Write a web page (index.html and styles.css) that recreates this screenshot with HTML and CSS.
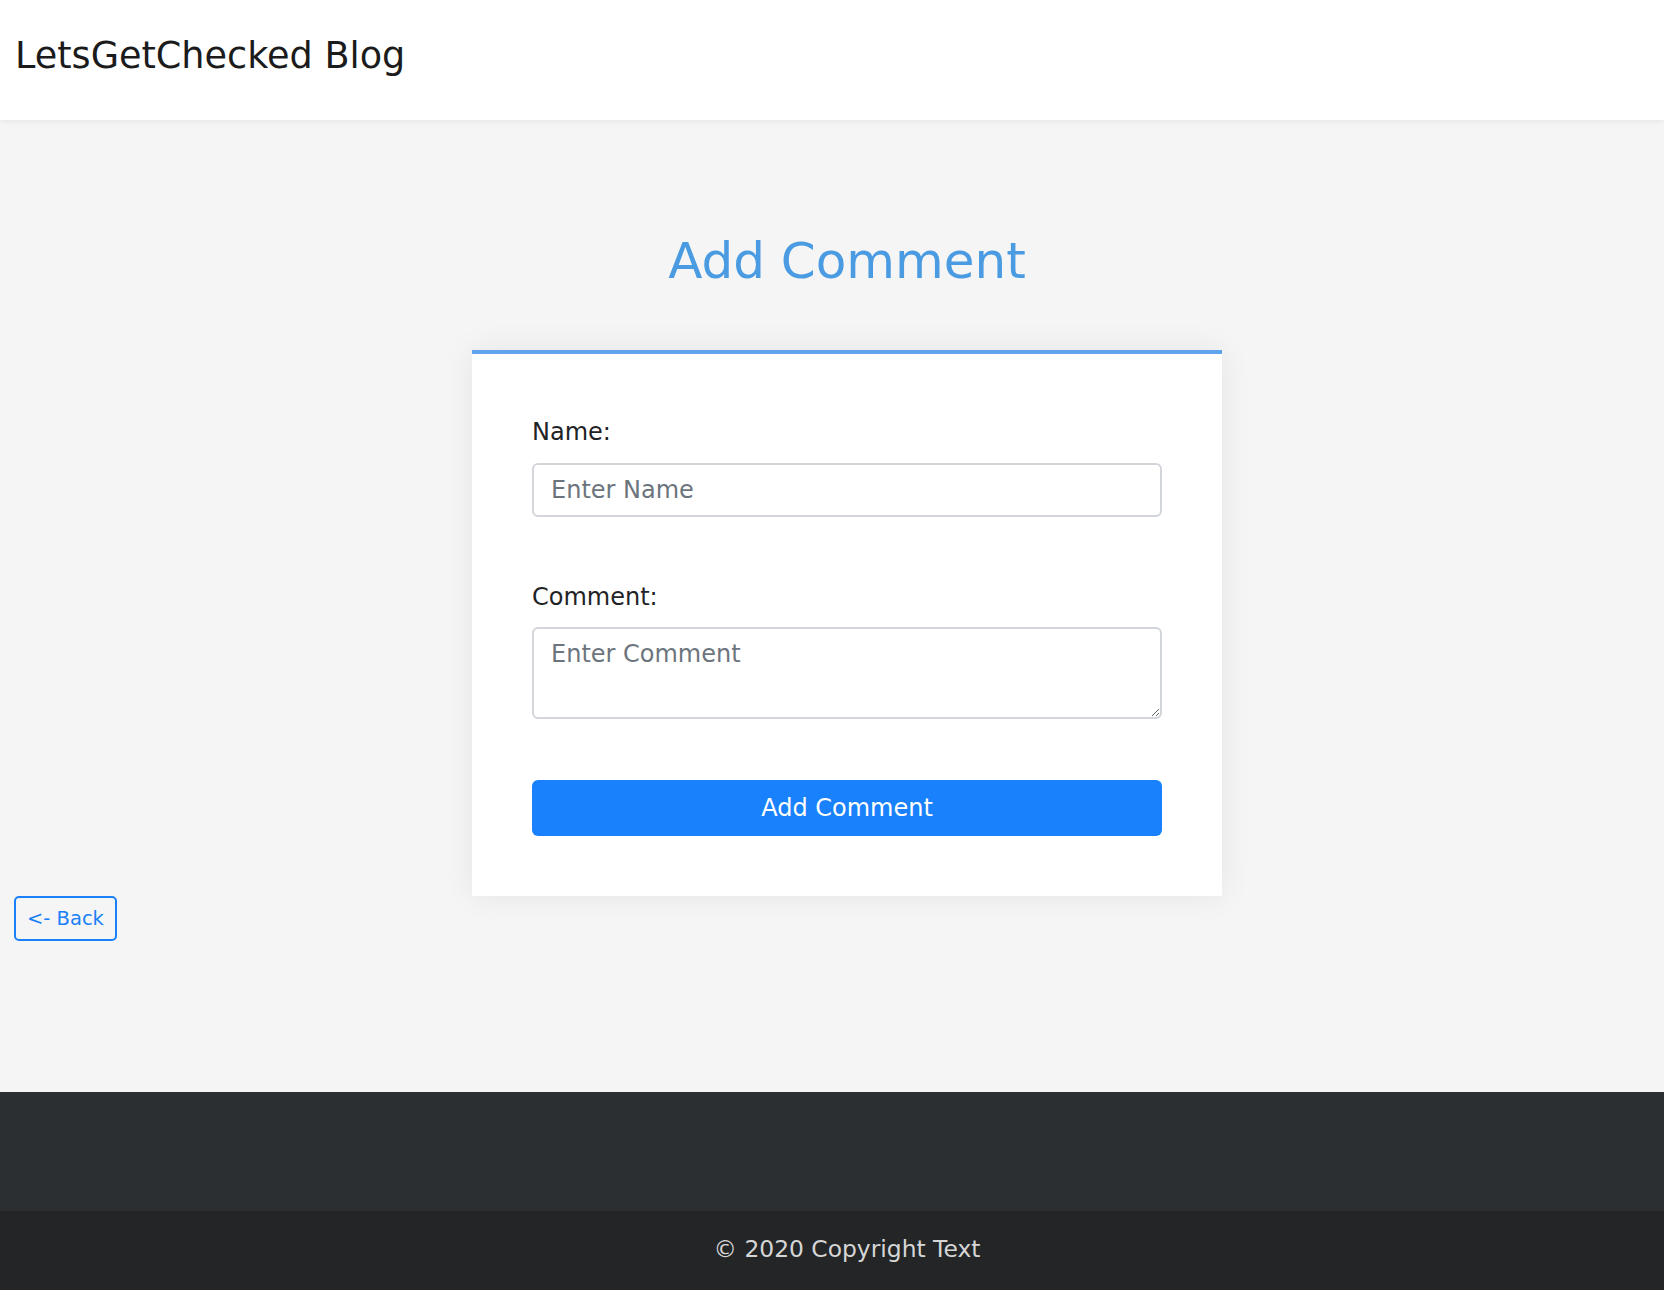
FILE: index.html
```html
<!DOCTYPE html>
<html lang="en">
<head>
<meta charset="utf-8">
<title>LetsGetChecked Blog</title>
<link rel="stylesheet" href="styles.css">
</head>
<body>
<header class="site-header">
  <div class="brand">LetsGetChecked Blog</div>
</header>
<main class="main">
  <div class="content">
    <h1 class="page-title">Add Comment</h1>
    <form class="card">
      <div class="form-group">
        <label class="form-label" for="name">Name:</label>
        <input class="form-control" id="name" type="text" placeholder="Enter Name">
      </div>
      <div class="form-group">
        <label class="form-label" for="comment">Comment:</label>
        <textarea class="form-control form-textarea" id="comment" placeholder="Enter Comment"></textarea>
      </div>
      <button class="btn-primary" type="button">Add Comment</button>
    </form>
  </div>
  <div class="back-row">
    <a class="btn-back" href="#">&lt;- Back</a>
  </div>
</main>
<footer class="site-footer">
  <div class="footer-top"></div>
  <div class="footer-bottom">© 2020 Copyright Text</div>
</footer>
</body>
</html>
```
FILE: styles.css
```css
* { box-sizing: border-box; }
html, body { margin: 0; padding: 0; background: #ffffff; }
body {
  font-family: "DejaVu Sans", "Noto Sans", sans-serif;
  color: #212529;
}
.site-header {
  position: relative;
  z-index: 1;
  background: #ffffff;
  height: 120px;
  padding: 38px 15px 46px;
  box-shadow: 0 2px 6px rgba(0, 0, 0, 0.06);
}
.brand {
  font-size: 36.6px;
  line-height: 36px;
  color: #1b1b1b;
}
.main {
  background: #f5f5f5;
  padding: 111px 0 151px;
}
.content {
  display: flex;
  flex-direction: column;
  align-items: center;
  padding-left: 30px;
}
.page-title {
  margin: 0;
  font-size: 50px;
  line-height: 60px;
  font-weight: normal;
  color: #4a9be2;
}
.card {
  margin-top: 59px;
  width: 750px;
  background: #ffffff;
  border-top: 4px solid #5fa3ec;
  padding: 60px 60px 60px 60px;
  box-shadow: 0 0 30px rgba(0, 0, 0, 0.07);
  display: flex;
  flex-direction: column;
}
.form-group {
  display: flex;
  flex-direction: column;
  margin-bottom: 62px;
}
.form-group + .form-group { margin-bottom: 61px; }
.form-label {
  font-size: 24px;
  line-height: 36px;
  margin-bottom: 13px;
  color: #1f2326;
}
.form-control {
  font-family: inherit;
  font-size: 24px;
  line-height: 36px;
  height: 54px;
  padding: 7px 17px;
  border: 2px solid #d2d6db;
  border-radius: 6px;
  color: #495057;
  background: #ffffff;
  outline: none;
}
.form-control::placeholder { color: #6c757d; opacity: 1; }
.form-textarea {
  height: 92px;
  resize: both;
  margin-top: -1px;
}
.btn-primary {
  font-family: inherit;
  font-size: 24px;
  height: 56px;
  border: none;
  border-radius: 6px;
  background: #1881fb;
  color: #ffffff;
  cursor: pointer;
}
.back-row {
  padding-left: 14px;
}
.btn-back {
  display: inline-block;
  height: 45px;
  padding: 0 11px;
  border: 2px solid #1a80f8;
  border-radius: 5px;
  font-size: 19.5px;
  line-height: 41px;
  color: #1a80f8;
  text-decoration: none;
}
.footer-top {
  background: #2c2f32;
  height: 119px;
}
.footer-bottom {
  background: #232527;
  height: 79px;
  padding-left: 30px;
  padding-bottom: 3px;
  display: flex;
  align-items: center;
  justify-content: center;
  font-size: 23.4px;
  color: #d6d6d6;
}
```
